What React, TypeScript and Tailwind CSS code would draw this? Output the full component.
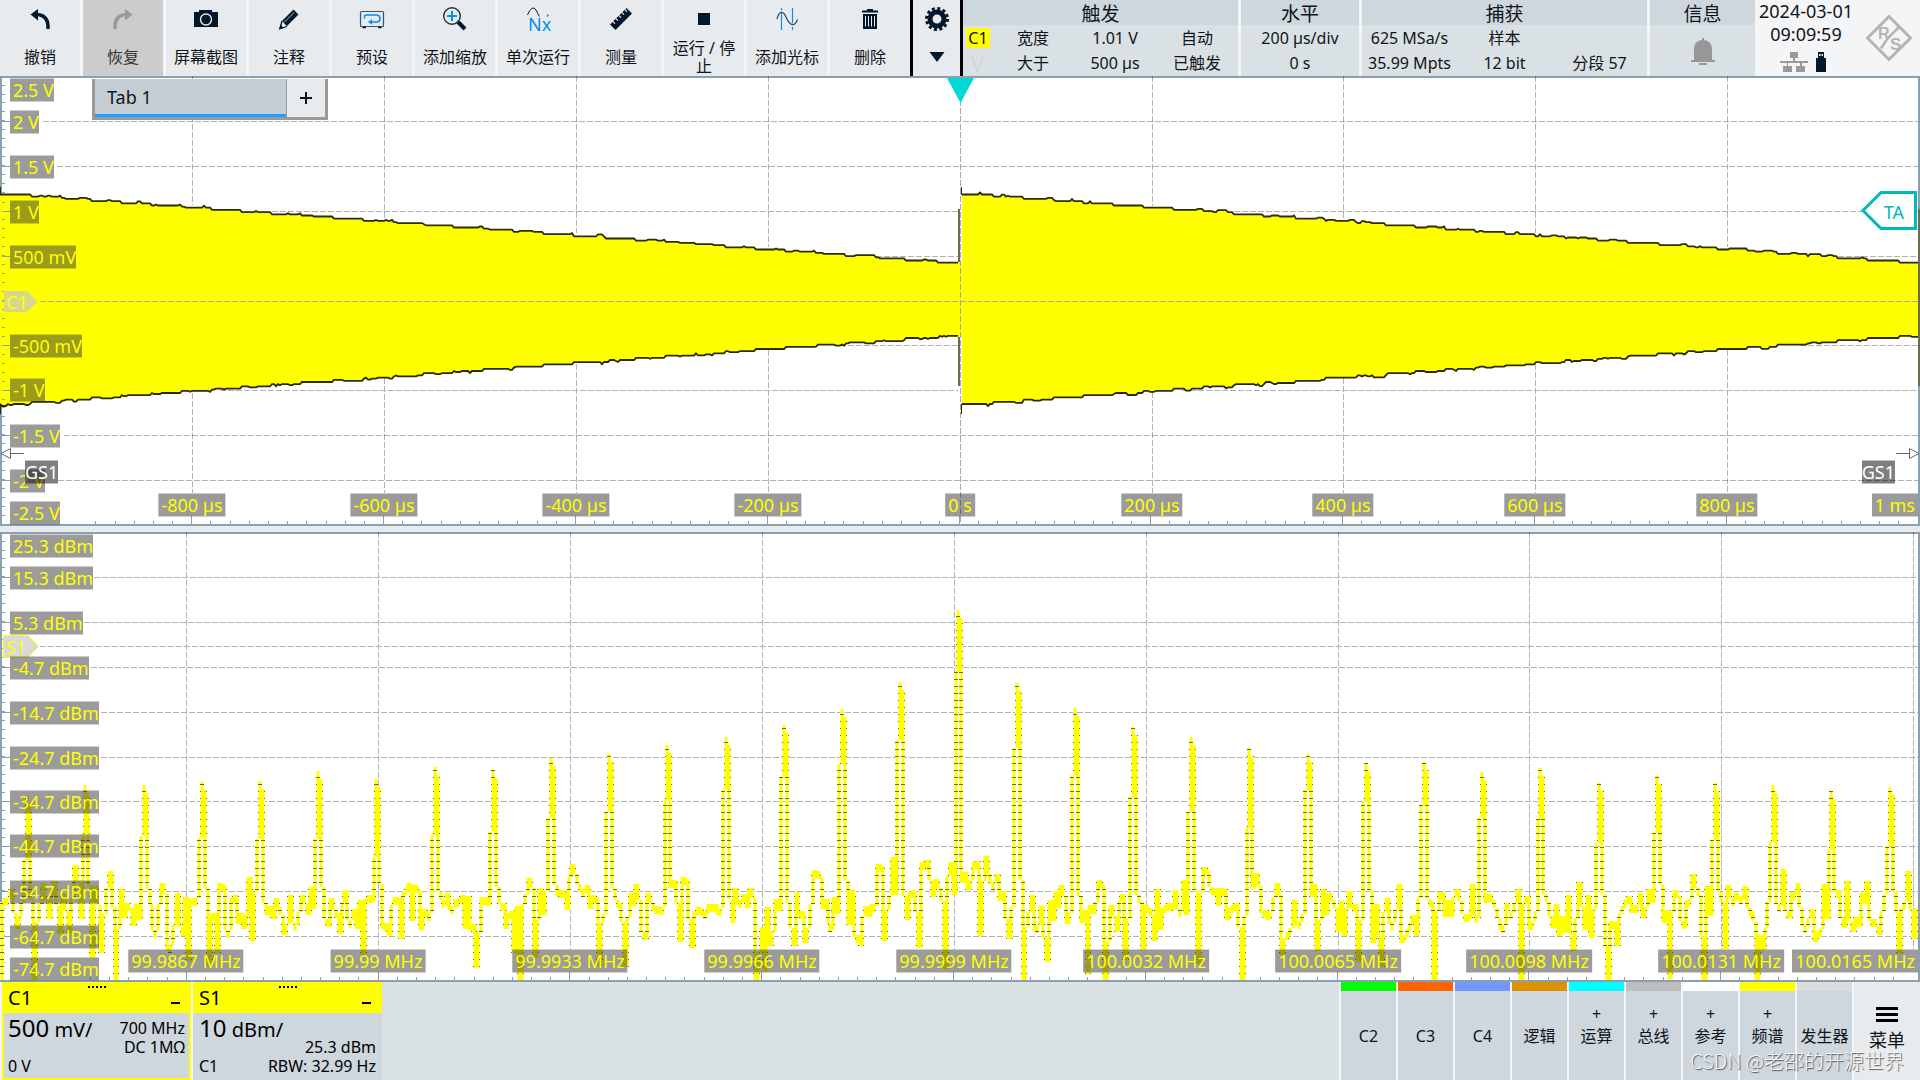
import type { ReactNode } from "react";

const DARK = "#03172a";
const BLUE = "#0090f0";
const RULE = "#8aa0b0";

/* ---------- deterministic noise ---------- */

function makeRandom(seed: number) {
  let s = seed >>> 0;
  return () => {
    s = (s + 0x6d2b79f5) >>> 0;
    let t = s;
    t = Math.imul(t ^ (t >>> 15), t | 1);
    t ^= t + Math.imul(t ^ (t >>> 7), t | 61);
    return ((t ^ (t >>> 14)) >>> 0) / 4294967296;
  };
}

/* ---------- time-domain envelope ---------- */

function buildEnvelope() {
  const rnd = makeRandom(11);
  const edge = (start: number, end: number, y0: number, dir: number) => {
    const pts: string[] = [];
    let bump = 0;
    for (let x = start; x <= end; x += 2) {
      const k = Math.floor((x - start) / 30.2);
      if (rnd() > 0.6) bump = rnd() > 0.75 ? (rnd() > 0.8 ? 2 : 1) : 0;
      const y = y0 + dir * (2.2 * k - bump);
      pts.push(`${x},${y.toFixed(1)}`);
    }
    return pts;
  };
  return [
    { top: edge(0, 958, 194.5, 1), bottom: edge(0, 958, 404, -1) },
    { top: edge(962, 1918, 194.5, 1), bottom: edge(962, 1918, 404, -1) },
  ];
}

/* ---------- frequency-domain trace ---------- */

/* [apex, shoulder] of every comb line */
const PEAKS: [number, number][] = [
  [796, 860], [785, 834], [785, 836], [782, 838], [781, 839], [771, 839], [779, 857], [767, 835], [770, 832],
  [758, 818], [754, 812], [745, 800], [737, 790], [725, 777], [709, 764], [682, 740], [610, 672], [683, 748],
  [708, 775], [727, 797], [737, 812], [748, 828], [754, 790], [763, 802], [762, 805], [772, 818], [768, 819],
  [783, 843], [776, 833], [783, 840], [785, 842], [791, 850], [787, 846],
];

function buildSpectrum() {
  const rnd = makeRandom(47);
  const gauss = () => Math.sqrt(-2 * Math.log(rnd() + 1e-9)) * Math.cos(6.28318 * rnd());
  const step = 2.91;
  const count = Math.ceil(1916 / step) + 2;
  const re = Array.from({ length: count + 2 }, gauss);
  const im = Array.from({ length: count + 2 }, gauss);
  const values: number[] = [];
  for (let i = 0; i < count; i++) {
    const a = 0.3 * re[i] + re[i + 1] + 0.3 * re[i + 2];
    const b = 0.3 * im[i] + im[i + 1] + 0.3 * im[i + 2];
    const x = 3 + i * step;
    const lift = 26 * Math.exp(-Math.pow((x - 950) / 80, 2));
    const y = 902 - lift - 44.9 * Math.log10((a * a + b * b) / 2.36 + 1e-6);
    values.push(Math.min(980, Math.max(864 - lift, y)));
  }
  const apex = new Map<number, number>();
  PEAKS.forEach(([top, shoulder], n) => {
    const c = Math.round((28 + n * 58.2 - 3) / step);
    values[c - 2] = 890 + rnd() * 30;
    values[c - 1] = shoulder;
    values[c] = top;
    values[c + 1] = 880 + rnd() * 25;
    apex.set(c, top + 8);
  });
  const cols: { x: number; a: number; b: number }[] = [];
  for (let i = 0; i + 1 < values.length; i++) {
    const x = Math.round(3 + i * step);
    const lo = apex.get(i) ?? Math.min(values[i], values[i + 1]);
    const hi = Math.max(values[i], values[i + 1], lo + 8);
    if (x < 1916) cols.push({ x, a: Math.round(lo), b: Math.min(980, Math.round(hi)) });
  }
  let lines = "M2 902V980";
  let solid = "";
  cols.forEach((c, i) => {
    lines += `M${c.x + 1} ${c.a}V${c.b}`;
    const n = cols[i + 1];
    if (n) {
      const a = Math.max(c.a, n.a);
      const b = Math.min(c.b, n.b);
      if (b > a) solid += `M${c.x} ${a}H${n.x + 2}V${b}H${c.x}Z`;
    }
  });
  return { lines, solid };
}

const ENVELOPE = buildEnvelope();
const SPECTRUM = buildSpectrum();

/* ---------- plot pieces ---------- */

const pct = (v: number, origin: number, size: number) => `${((v - origin) / size) * 100}%`;

function Plot({ top, label, children, marks }: { top: number; label: string; children: ReactNode; marks: ReactNode }) {
  return (
    <section aria-label={label} className="relative min-h-0 flex-1 border-2 border-[#8aa0b0] bg-white">
      <svg
        className="absolute inset-0 h-full w-full overflow-visible"
        viewBox={`2 ${top} 1916 446`}
        preserveAspectRatio="none"
        shapeRendering="crispEdges"
        aria-hidden="true"
      >
        {children}
      </svg>
      {marks}
    </section>
  );
}

function Ruler({ top, offset, majors }: { top: number; offset: number; majors: number[] }) {
  let d = "";
  for (let y = majors[0] - 36; y < top + 446; y += 8.97) if (y > top) d += `M2 ${y.toFixed(1)}h3`;
  majors.forEach((y) => (d += `M2 ${y + 0.5}h8`));
  for (let k = 5; k < 100; k++) {
    const x = Math.floor(offset + k * 19.18) + 0.5;
    const h = k % 10 === 0 ? 8 : 3;
    if (x < 1916) d += `M${x} ${top + 446}v${-h}`;
  }
  return <path d={d} stroke={RULE} fill="none" />;
}

function GridLines({ rows, cols, top, bottom }: { rows: [number, number][]; cols: number[]; top: number; bottom: number }) {
  const d =
    rows.map(([y, x]) => `M${x} ${y + 0.5}H1918`).join("") + cols.map((x) => `M${x + 0.5} ${top - 2}V${bottom}`).join("");
  return <path d={d} stroke="#000" strokeOpacity="0.3" strokeDasharray="6 2" fill="none" />;
}

function YLabel({ y, top, text }: { y: number; top: number; text: string }) {
  return (
    <span
      className="absolute left-2 -translate-y-1/2 bg-[#383838]/50 pl-[3px] text-lg leading-[23px] whitespace-nowrap text-[#ffff00]"
      style={{ top: pct(y, top, 446) }}
    >
      {text}
    </span>
  );
}

function XLabel({ x, y, top, text }: { x: number; y: number; top: number; text: string }) {
  return (
    <span
      className="absolute -translate-x-1/2 -translate-y-1/2 bg-[#383838]/50 px-[3px] text-lg leading-[23px] whitespace-nowrap text-[#ffff00]"
      style={{ left: pct(x, 2, 1916), top: pct(y, top, 446) }}
    >
      {text}
    </span>
  );
}

const V_LABELS: [number, string][] = [
  [89.5, "2.5 V"], [121.5, "2 V"], [166.5, "1.5 V"], [211.5, "1 V"], [256.5, "500 mV"],
  [345.5, "-500 mV"], [390.5, "-1 V"], [435.5, "-1.5 V"], [480.5, "-2 V"], [512.5, "-2.5 V"],
];
const T_LABELS: [number, string][] = [
  [192, "-800 µs"], [384, "-600 µs"], [576, "-400 µs"], [768, "-200 µs"], [960, "0 s"],
  [1152, "200 µs"], [1343, "400 µs"], [1535, "600 µs"], [1727, "800 µs"],
];
const P_LABELS: [number, string][] = [
  [545.5, "25.3 dBm"], [577.5, "15.3 dBm"], [622.5, "5.3 dBm"], [667.5, "-4.7 dBm"], [712.5, "-14.7 dBm"],
  [757.5, "-24.7 dBm"], [801.5, "-34.7 dBm"], [846.5, "-44.7 dBm"], [891.5, "-54.7 dBm"], [936.5, "-64.7 dBm"],
  [968.5, "-74.7 dBm"],
];
const F_LABELS: [number, string][] = [
  [186, "99.9867 MHz"], [378, "99.99 MHz"], [570, "99.9933 MHz"], [762, "99.9966 MHz"], [954, "99.9999 MHz"],
  [1146, "100.0032 MHz"], [1338, "100.0065 MHz"], [1529, "100.0098 MHz"], [1721, "100.0131 MHz"],
];

function TimePlot() {
  const top = 78;
  return (
    <Plot
      top={top}
      label="C1"
      marks={
        <>
          {V_LABELS.map(([y, t]) => <YLabel key={t} y={y} top={top} text={t} />)}
          {T_LABELS.map(([x, t]) => <XLabel key={t} x={x} y={504.5} top={top} text={t} />)}
          <span className="absolute right-0 -translate-y-1/2 bg-[#383838]/50 px-[3px] text-lg leading-[23px] text-[#ffff00]" style={{ top: pct(504.5, top, 446) }}>
            1 ms
          </span>
          <span className="absolute left-1 -translate-y-1/2 text-lg leading-[23px] text-[#ffff00]" style={{ top: pct(301.5, top, 446) }}>
            C1
          </span>
          <span className="absolute left-[23px] -translate-y-1/2 bg-black/50 text-lg leading-[23px] text-white" style={{ top: pct(471.5, top, 446) }}>
            GS1
          </span>
          <span className="absolute right-[23px] -translate-y-1/2 bg-black/50 text-lg leading-[23px] text-white" style={{ top: pct(471.5, top, 446) }}>
            GS1
          </span>
          <span className="absolute right-3.5 -translate-y-1/2 text-lg leading-[23px] text-[#00b9b9]" style={{ top: pct(211.5, top, 446) }}>
            TA
          </span>
          <div role="tablist" className="absolute top-px left-[90px] flex h-[41px] w-[236px] border-x-3 border-b-3 border-[#9a9a9a]">
            <button role="tab" aria-selected="true" className="flex-1 border-b-3 border-[#1e9fff] bg-[#c5ced5] pl-3 text-left text-lg leading-none text-[#101418]">
              Tab 1
            </button>
            <button aria-label="添加标签" className="flex w-[39px] items-center justify-center border-l border-[#9a9a9a] bg-[#e8ebee]">
              <svg width="12" height="12" viewBox="0 0 12 12" stroke={DARK} strokeWidth="2" shapeRendering="crispEdges"><path d="M6 0v12M0 6h12" /></svg>
            </button>
          </div>
        </>
      }
    >
      <Ruler top={top} offset={0} majors={[121, 166, 211, 256, 301, 345, 390, 435, 480]} />
      {ENVELOPE.map((e, i) => (
        <g key={i} shapeRendering="auto">
          <polygon points={[...e.top, ...[...e.bottom].reverse()].join(" ")} fill="#ffff00" />
          <polyline points={e.top.join(" ")} fill="none" stroke="#2c2c00" strokeWidth="1.8" />
          <polyline points={e.bottom.join(" ")} fill="none" stroke="#2c2c00" strokeWidth="1.8" />
        </g>
      ))}
      <path d="M959 209V262M959 337V386M1919 209V386" stroke="#6b6b50" strokeWidth="2" />
      <path d="M961.5 187V195M961.5 404V414M0.5 187V195M0.5 404V414" stroke="#2c2c00" strokeWidth="1.5" />
      <path d="M958 262H962V337H958Z" fill="#ffff00" />
      <path
        d={Array.from({ length: 23 }, (_, i) => `M2 ${(202 + i * 8.97).toFixed(1)}h3`).join("") + "M2 211.500h8M2 256.500h8M2 301.500h8M2 345.500h8M2 390.500h8"}
        stroke={RULE}
      />
      <GridLines rows={[[121, 43], [166, 57], [435, 64], [480, 58]]} cols={[]} top={top} bottom={524} />
      <path d="M40 301.500H1918M960.500 76V526" stroke="#a8a8a8" strokeDasharray="6 2" fill="none" />
      <path
        d="M192.5 76V205M192.5 393V493M384.5 76V220M384.5 378V493M576.5 76V233M576.5 364V493M768.5 76V247M768.5 350V493M1152.5 76V206M1152.5 392V493M1343.5 76V220M1343.5 378V493M1535.5 76V233M1535.5 364V493M1727.5 76V247M1727.5 350V493M272 211.5H958M1234 211.5H1918M876 256.5H958M1838 256.5H1918M840 345.5H958M1800 345.5H1918M220 390.5H958M1182 390.5H1918"
        stroke="#000"
        strokeOpacity="0.3"
        strokeDasharray="6 2"
        fill="none"
      />
      <path d="M947 78H974L960.5 103Z" fill="#00d8d8" shapeRendering="auto" />
      <path d="M1863 210.500L1881 192.500H1915.500V228.500H1881Z" fill="#fff" stroke="#00b9b9" strokeWidth="3" shapeRendering="auto" />
      <path d="M4 291H27L38 301.500L27 312H4Z" fill="#d8d88a" shapeRendering="auto" />
      <path d="M1 453.500L10.500 448.500V458.500ZM10.500 453.500H24M1919 453.500L1909.500 448.500V458.500ZM1909.500 453.500H1896" fill="#fff" stroke="#666" shapeRendering="auto" />
    </Plot>
  );
}

function SpectrumPlot() {
  const top = 534;
  return (
    <Plot
      top={top}
      label="S1"
      marks={
        <>
          {P_LABELS.map(([y, t]) => <YLabel key={t} y={y} top={top} text={t} />)}
          {F_LABELS.map(([x, t]) => <XLabel key={t} x={x} y={960.5} top={top} text={t} />)}
          <span className="absolute right-0 -translate-y-1/2 bg-[#383838]/50 px-[3px] text-lg leading-[23px] text-[#ffff00]" style={{ top: pct(960.5, top, 446) }}>
            100.0165 MHz
          </span>
          <span className="absolute left-1 -translate-y-1/2 text-lg leading-[23px] text-[#ffff00]" style={{ top: pct(646.5, top, 446) }}>
            S1
          </span>
        </>
      }
    >
      <defs>
        <pattern id="scan" patternUnits="userSpaceOnUse" width="8" height="7">
          <rect width="8" height="1" fill="#6e6e00" />
        </pattern>
      </defs>
      <GridLines
        rows={[[577, 94], [622, 84], [646, 40], [667, 91], [712, 101], [757, 101], [801, 101], [846, 101], [891, 101], [936, 101]]}
        cols={[186, 378, 570, 762, 954, 1146, 1338, 1529, 1721, 1913]}
        top={top}
        bottom={949}
      />
      <Ruler top={top} offset={-5.5} majors={[577, 622, 667, 712, 757, 801, 846, 891, 936]} />
      <path d={SPECTRUM.lines} stroke="#ffff8c" strokeWidth="4" fill="none" />
      <path d={SPECTRUM.lines} stroke="#ffff00" strokeWidth="2" fill="none" />
      <path d={SPECTRUM.lines} stroke="url(#scan)" strokeWidth="4" fill="none" />
      <path d={SPECTRUM.solid} fill="#ffff00" />
      <path d="M3.500 635.500H28L38.500 646.500L28 657.500H3.500Z" fill="#d9d9d9" stroke="#ffff00" shapeRendering="auto" />
    </Plot>
  );
}

/* ---------- toolbar ---------- */

const ICONS: Record<string, ReactNode> = {
  undo: (
    <g>
      <path d="M2.500 7.500L10 2V13.500Z" fill={DARK} />
      <path d="M9 7.500C17 8 20.500 13 20 22" fill="none" stroke={DARK} strokeWidth="3.500" />
    </g>
  ),
  redo: (
    <g>
      <path d="M21.500 7.500L14 2V13.500Z" fill="#999" />
      <path d="M15 7.500C7 8 3.500 13 4 22" fill="none" stroke="#999" strokeWidth="3.500" />
    </g>
  ),
  camera: (
    <g>
      <path d="M0 5H5V3H18V5H24V20H0Z" fill={DARK} />
      <circle cx="12" cy="12.500" r="5.500" fill={DARK} stroke="#e8ebee" strokeWidth="1.400" />
    </g>
  ),
  pencil: (
    <g>
      <path d="M16.500 2.500L21.500 7.500L9.500 19.500L4.500 14.500Z" fill={DARK} />
      <path d="M5 14L3 21.500L10 19.500" fill="#e8ebee" stroke={DARK} strokeWidth="1.300" />
      <path d="M2 22.500L3.500 17.500L6.500 21Z" fill={DARK} />
      <path d="M7 15.500L17 5.500" stroke="#e8ebee" strokeWidth="0.800" />
    </g>
  ),
  preset: (
    <g fill="none">
      <rect x="0.500" y="4.500" width="23" height="15" rx="1" stroke="#3c5468" strokeWidth="1.200" />
      <path d="M2.500 20.500H6M18 20.500H21.500" stroke={DARK} strokeWidth="1.500" />
      <path d="M4.500 11.500V9.500Q4.500 8 6 8H16Q20 8 20 11.500T16 15H11" stroke={BLUE} strokeWidth="1.600" />
      <path d="M12 12.200V17.800L8 15Z" fill={BLUE} />
    </g>
  ),
  zoom: (
    <g fill="none">
      <circle cx="9" cy="9" r="8.300" stroke="#1d3040" strokeWidth="1.400" />
      <path d="M9 4V14M4 9H14" stroke={BLUE} strokeWidth="2" />
      <path d="M15 15L22 22" stroke={DARK} strokeWidth="4" />
    </g>
  ),
  single: (
    <g>
      <path d="M1.500 8Q6 -3 10 3Q12 7 13.500 9.500M21.500 9.500L22 7.500" fill="none" stroke={DARK} strokeWidth="1" />
      <text x="2" y="24" fontSize="18" fill={BLUE}>Nx</text>
    </g>
  ),
  ruler: (
    <g>
      <path d="M1 17.500L17.500 1L23 6.500L6.500 23Z" fill={DARK} />
      <path d="M3.200 13.800L6 16.600M6.200 10.800L9 13.600M9.200 7.800L12 10.600M12.200 4.800L15 7.600M15.200 1.800L18 4.600" stroke="#e8ebee" strokeWidth="1.200" />
    </g>
  ),
  stop: <rect x="6" y="6" width="12" height="12" fill={DARK} />,
  cursor: (
    <g fill="none">
      <path d="M6.500 1V3.500M6.500 5.500V23M17.500 1V16.500M17.500 20V23" stroke={BLUE} strokeWidth="1.200" />
      <path d="M2 12C4 4 8 3 11 10S19 22 22.500 12.500" stroke="#3c5060" strokeWidth="1.300" />
    </g>
  ),
  trash: (
    <g>
      <path d="M4 3.500H9V2H15V3.500H20V5.500H4ZM5 7H19V22H5Z" fill={DARK} />
      <path d="M7.500 9V19.500M10.500 9V19.500M13.500 9V19.500M16.500 9V19.500" stroke="#e8ebee" strokeWidth="1" />
    </g>
  ),
};

const TOOLS: [string, string][] = [
  ["undo", "撤销"], ["redo", "恢复"], ["camera", "屏幕截图"], ["pencil", "注释"], ["preset", "预设"], ["zoom", "添加缩放"],
  ["single", "单次运行"], ["ruler", "测量"], ["stop", "运行 / 停止"], ["cursor", "添加光标"], ["trash", "删除"],
];

function Toolbar() {
  return (
    <div className="flex shrink-0 gap-[3px]">
      {TOOLS.map(([icon, label]) => (
        <button
          key={icon}
          disabled={icon === "redo"}
          className="flex w-20 flex-col items-center bg-[#e8ebee] pt-[7px] text-[#101418] disabled:bg-[#ccc] disabled:text-[#333]"
        >
          <svg width="24" height="24" viewBox="0 0 24 24" className="overflow-visible" aria-hidden="true">{ICONS[icon]}</svg>
          <span className="mt-1.5 flex flex-1 items-center px-2 text-center text-base leading-[18px]">{label}</span>
        </button>
      ))}
    </div>
  );
}

function Panel({ title, className, children }: { title: string; className: string; children: ReactNode }) {
  return (
    <section className={`flex min-w-0 basis-0 flex-col bg-[#dae1e4] ${className}`}>
      <h2 className="h-[25px] bg-[#ced6de] text-center text-[19px] leading-7">{title}</h2>
      {children}
    </section>
  );
}

function Header() {
  return (
    <header className="flex h-[76px] shrink-0 bg-[#f4f5f7]">
      <Toolbar />
      <button aria-label="设置" className="flex w-[53px] shrink-0 flex-col items-center border-x-3 border-black bg-[#e8ebee] pt-[7px]">
        <svg width="24" height="24" viewBox="0 0 24 24" fill="none" stroke={DARK} aria-hidden="true">
          <circle cx="12" cy="12" r="7" strokeWidth="5" />
          <circle cx="12" cy="12" r="10.500" strokeWidth="3" strokeDasharray="3 2.498" />
        </svg>
        <svg width="16" height="10" viewBox="0 0 16 10" className="mt-[21px]" aria-hidden="true"><path d="M0.500 0H15.500L8 10Z" fill={DARK} /></svg>
      </button>
      <div className="flex min-w-0 flex-1 gap-[3px]">
        <Panel title="触发" className="grow-[275]">
          <div className="grid flex-1 grid-cols-[29px_1fr_1fr_1fr] grid-rows-2 items-center text-center text-base leading-5">
            <span className="ml-[3px] w-6 bg-[#ffff00]">C1</span>
            <span>宽度</span><span>1.01 V</span><span>自动</span>
            <span className="text-2xl leading-5 font-light text-[#d4d2d4]">V</span>
            <span>大于</span><span>500 µs</span><span>已触发</span>
          </div>
        </Panel>
        <Panel title="水平" className="grow-[118]">
          <div className="grid flex-1 grid-rows-2 items-center text-center text-base leading-5">
            <span>200 µs/div</span><span>0 s</span>
          </div>
        </Panel>
        <Panel title="捕获" className="grow-[285]">
          <div className="grid flex-1 grid-cols-3 grid-rows-2 items-center text-center text-base leading-5 whitespace-nowrap">
            <span>625 MSa/s</span><span>样本</span><span />
            <span>35.99 Mpts</span><span>12 bit</span><span>分段 57</span>
          </div>
        </Panel>
        <Panel title="信息" className="grow-[105]">
          <div className="flex flex-1 items-center justify-center">
            <svg width="24" height="28" viewBox="0 0 24 28" fill="#979797" aria-label="通知" role="img">
              <path d="M11 1H13V3C18 3.500 21 7 21 12V23H24V25H0V23H3V12C3 7 6 3.500 11 3ZM8 26H16V28H8Z" />
            </svg>
          </div>
        </Panel>
      </div>
      <div className="flex w-[165px] shrink-0 items-start text-lg">
        <div className="flex w-[102px] flex-col items-center">
          <time className="text-center leading-[23px]">2024-03-01<br />09:09:59</time>
          <div className="mt-1.5 flex gap-2 pr-1.5">
            <svg width="28" height="20" viewBox="0 0 28 20" fill="#999" shapeRendering="crispEdges" aria-hidden="true">
              <path d="M10 0H18V6H15V9H28V11H22V14H25V20H16V14H20V11H8V14H12V20H3V14H7V11H0V9H13V6H10Z" />
            </svg>
            <svg width="10" height="20" viewBox="0 0 10 20" aria-hidden="true">
              <path d="M2 0H8V6H10V20H0V6H2Z" fill={DARK} /><path d="M3 2H4.500V4H3ZM5.500 2H7V4H5.500Z" fill="#fff" />
            </svg>
          </div>
        </div>
        <svg width="48" height="48" viewBox="0 0 48 48" className="mt-3.5 ml-2" role="img" aria-label="R&S">
          <path d="M24 2.500L45.500 24L24 45.500L2.500 24Z" fill="none" stroke="#b4b4b4" strokeWidth="3" />
          <path d="M34 13L23 24Q20 28 16 34.500" fill="none" stroke="#b4b4b4" strokeWidth="2.500" />
          <text x="13" y="25" fontSize="16" fontWeight="800" fill="#b4b4b4" fontFamily="Liberation Sans">R</text>
          <text x="25" y="36" fontSize="17" fontWeight="800" fill="#b4b4b4" fontFamily="Liberation Sans">S</text>
        </svg>
      </div>
    </header>
  );
}

/* ---------- footer ---------- */

function SignalCard({ name, scale, unit, lines, left, active }: { name: string; scale: string; unit: string; lines: string[]; left: string; active?: boolean }) {
  return (
    <section aria-label={name} className="flex w-[189px] flex-col bg-[#ffff00] text-black">
      <div className="relative flex h-[31px] shrink-0 items-center justify-between pr-[11px] pl-1.5 text-xl leading-none">
        <span>{name}</span>
        <svg className="absolute top-1 left-[86px]" width="18" height="2" viewBox="0 0 18 2" aria-hidden="true">
          <path d="M0 1H18" stroke="#000" strokeWidth="2" strokeDasharray="2 2" />
        </svg>
        <button aria-label={`最小化 ${name}`} className="mt-[11px] h-0.5 w-[9px] bg-black" />
      </div>
      <div className={`relative flex-1 bg-[#ced6de] text-base leading-[19px] whitespace-nowrap ${active ? "mx-0.5 mb-0.5 px-1 pb-0.5" : "px-1.5 pb-1"}`}>
        <div className="flex h-full justify-between">
          <div className="flex flex-col justify-between">
            <span className="text-xl leading-[30px]"><span className="text-2xl leading-[30px]">{scale}</span> {unit}</span>
            <span>{left}</span>
          </div>
          <div className="-ml-10 flex flex-col justify-end text-right">
            {lines.map((l) => <span key={l} className="h-[19px]">{l}</span>)}
          </div>
        </div>
      </div>
    </section>
  );
}

const SOURCES: [string, string, boolean][] = [
  ["C2", "bg-[#00ff00]", false], ["C3", "bg-[#ff6400]", false], ["C4", "bg-[#7396ff]", false], ["逻辑", "bg-[#dc9100]", false],
  ["运算", "bg-[#00ffff]", true], ["总线", "bg-[#bebebe]", true], ["参考", "bg-white", true], ["频谱", "bg-[#ffff00]", true],
  ["发生器", "bg-[#dcdcdc]", false],
];

function Footer() {
  return (
    <footer className="relative flex h-[98px] shrink-0 justify-between bg-[#dae1e4]">
      <div className="flex gap-0.5 bg-[#f4f5f7] pl-0.5">
        <SignalCard name="C1" scale="500" unit="mV/" left="0 V" lines={["700 MHz", "DC 1MΩ", ""]} active />
        <SignalCard name="S1" scale="10" unit="dBm/" left="C1" lines={["25.3 dBm", "RBW: 32.99 Hz"]} />
      </div>
      <div className="flex gap-0.5 bg-[#f4f5f7] pl-0.5">
        {SOURCES.map(([label, bar, plus]) => (
          <button key={label} className="flex w-[55px] flex-col items-center bg-[#ced6de] text-base text-[#101418]">
            <span className={`h-[9px] w-full ${bar}`} />
            <span className="mt-[13px] h-5 leading-5">{plus ? "+" : ""}</span>
            <span className="mt-0.5 leading-5 whitespace-nowrap">{label}</span>
          </button>
        ))}
        <button className="flex w-[66px] flex-col items-center bg-[#e8ebee] pt-[25px] text-lg">
          <svg width="22" height="15" viewBox="0 0 22 15" aria-hidden="true"><path d="M0 0H22V3H0ZM0 6H22V9H0ZM0 12H22V15H0Z" /></svg>
          <span className="mt-1.5 leading-6">菜单</span>
        </button>
      </div>
      <p className="pointer-events-none absolute right-4 bottom-[7px] font-['Noto_Sans_CJK_SC',sans-serif] text-xl leading-6 font-light text-[#f4f6f8] [text-shadow:1px_1px_1px_#555]">
        CSDN @老邵的开源世界
      </p>
    </footer>
  );
}

export default function App() {
  return (
    <div className="flex h-screen flex-col overflow-hidden bg-[#e8ebee] font-['Noto_Sans','Noto_Sans_CJK_SC',sans-serif] text-[#101418]">
      <Header />
      <main className="flex min-h-0 flex-1 flex-col gap-1.5">
        <TimePlot />
        <SpectrumPlot />
      </main>
      <Footer />
    </div>
  );
}
